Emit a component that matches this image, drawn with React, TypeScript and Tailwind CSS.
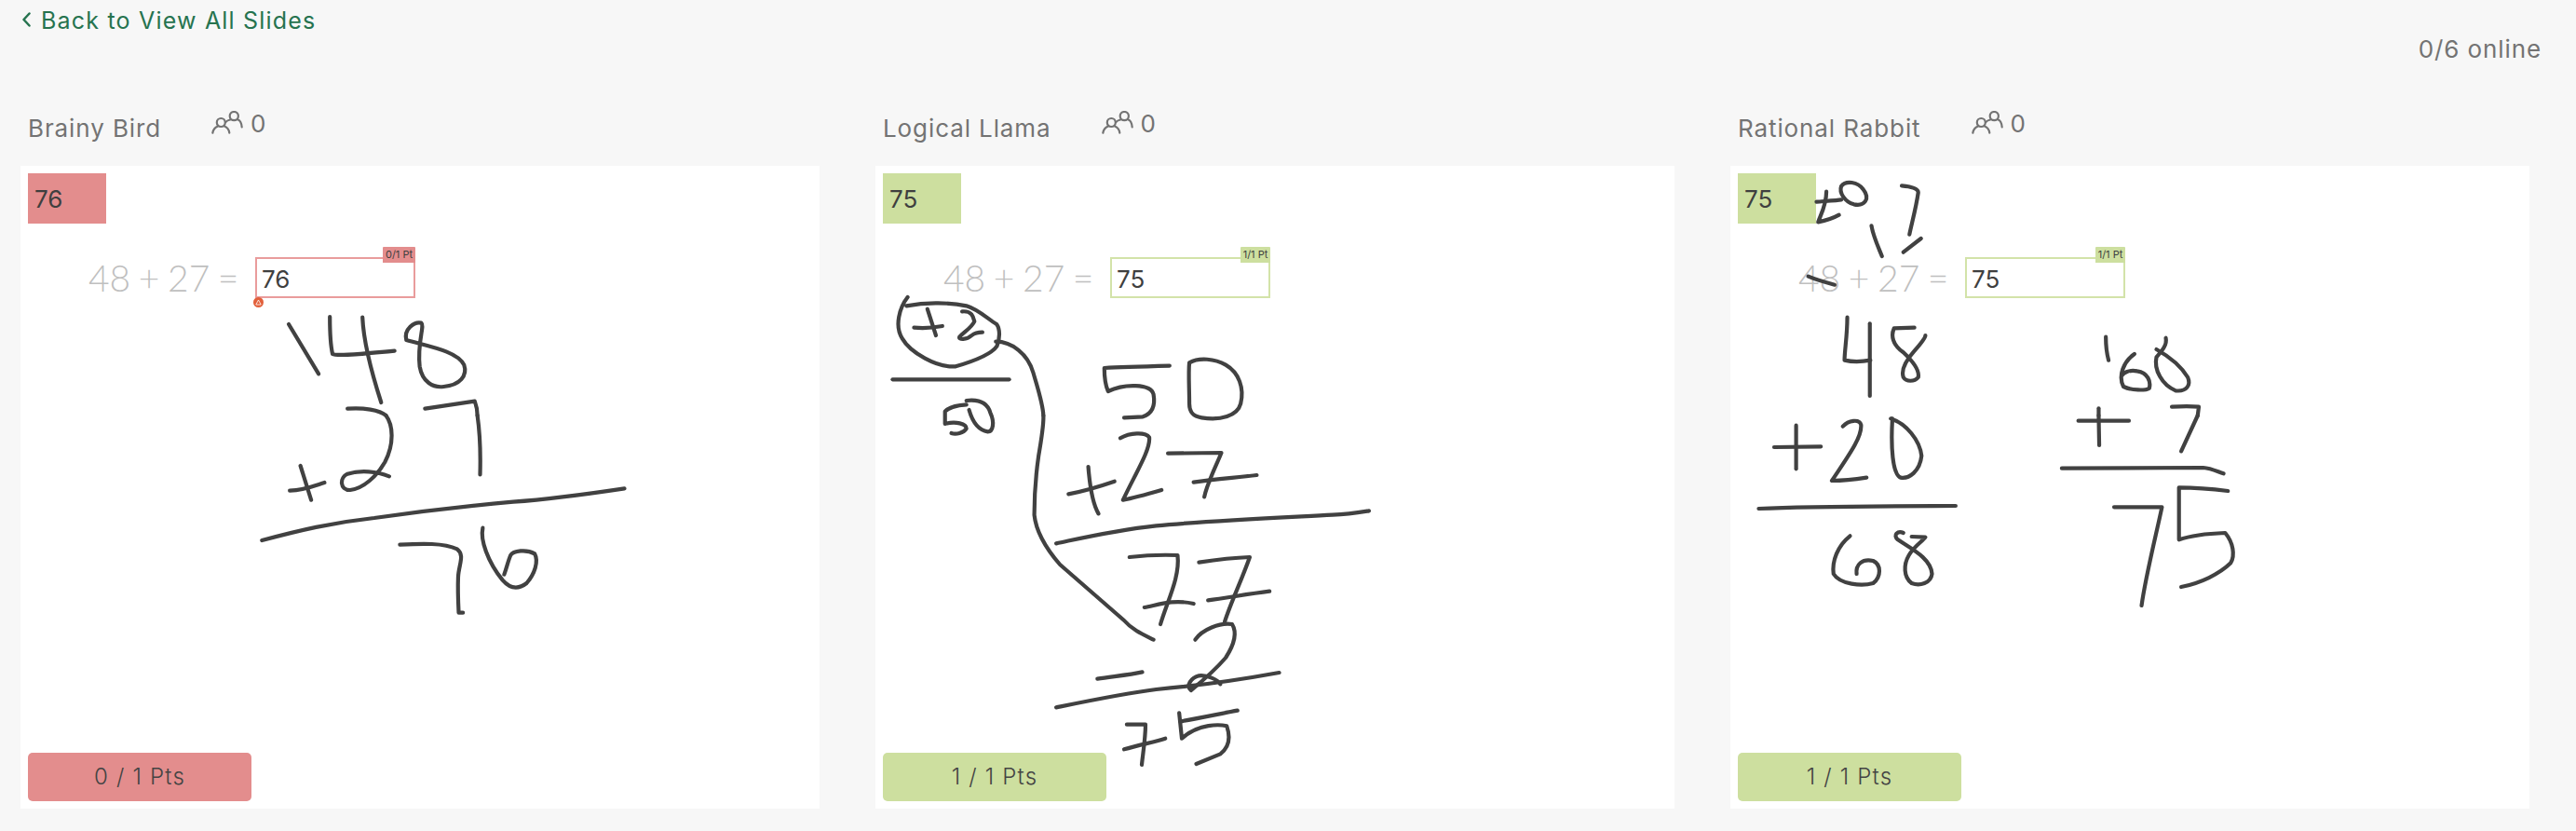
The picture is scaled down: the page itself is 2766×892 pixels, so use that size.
import React from 'react';

// Ink strokes were traced from crops, so each group has its own origin and scale.
type Stroke = { x: number; y: number; sx: number; d: string[] };

const panelOneInk: Stroke[] = [
  {
    x: -22, y: -178, sx: 1 / 1.742,
    d: [
      'M540 1044 L596 1204',
      'M617 1020 C617 1060 618 1110 622 1140 C630 1148 690 1138 738 1130',
      'M678 1022 C680 1100 695 1200 713 1296',
      'M760 1095 C755 1060 775 1035 788 1040 C795 1050 780 1100 785 1180 C790 1230 810 1250 830 1245 C860 1240 875 1210 868 1175 C855 1130 800 1115 760 1095 Z',
      'M650 1316 C680 1312 710 1320 722 1338',
      'M795 1316 L888 1292 C892 1310 893 1325 893 1338',
    ],
  },
  {
    x: -22, y: 268, sx: 1 / 1.742,
    d: [
      'M722 0 C735 30 738 90 720 150 C705 195 680 235 655 240 C635 240 635 200 650 188 C675 175 705 180 728 196',
      'M893 0 C898 60 899 130 898 190',
      'M562 162 L582 272',
      'M542 242 C570 240 590 225 607 216',
      'M490 402 C560 370 620 345 700 330 C800 305 880 290 960 278 C1040 268 1110 250 1168 235',
      'M748 416 C790 412 830 410 855 430 C870 450 858 480 857 520 C856 560 857 600 858 635 L866 635',
      'M903 362 C898 400 912 470 940 530 C955 560 970 560 985 540 C1000 510 1008 470 1000 445 C985 430 960 435 955 450 C950 470 948 490 943 512',
    ],
  },
];

const panelTwoInk: Stroke[] = [
  {
    x: -20, y: -78, sx: 1 / 1.742,
    d: [
      'M95 657 C80 690 70 750 85 790 C100 835 150 885 185 880 C215 865 250 845 262 815 C268 790 268 760 262 745 C240 720 225 695 205 685 C170 672 125 675 93 685',
      'M132 695 L148 780',
      'M107 755 C125 758 145 755 160 750',
      'M197 703 C215 700 218 720 220 735 C215 755 200 770 192 785 C190 795 205 795 215 780 C222 770 230 770 235 770',
      'M260 800 C290 800 320 840 330 900 C340 960 348 1000 349 1038',
      'M67 922 L285 922',
      'M205 1003 C185 1005 170 1015 165 1025 L165 1065 C185 1055 205 1065 205 1080 C200 1095 185 1100 177 1095',
      'M205 990 C230 985 245 1000 250 1030 C258 1060 255 1090 245 1090 C225 1085 215 1050 210 1020',
      'M585 878 C540 880 495 882 463 885 C463 910 465 940 470 960 C500 935 550 935 555 970 C558 1000 555 1030 535 1042 L500 1045',
      'M622 868 C640 850 670 855 690 875 C715 900 725 950 718 1000 C712 1040 680 1055 645 1045 C625 1040 622 1020 622 1000 C622 950 620 900 622 868 Z',
    ],
  },
  {
    x: -20, y: 268, sx: 1 / 1.742,
    d: [
      'M349 0 C350 30 345 80 340 130 C335 190 332 260 332 320 C335 370 350 420 380 480 C400 510 420 540 440 570 C460 600 480 630 500 660 C515 690 535 705 555 722',
      'M493 73 C510 55 540 52 547 70 C550 110 520 190 498 272 C520 265 550 250 570 240',
      'M582 122 L682 120 C670 170 655 220 650 262',
      'M630 215 C670 205 710 200 748 192',
      'M433 165 C435 210 440 280 452 316',
      'M396 253 C420 245 460 225 482 212',
      'M373 412 C420 395 480 370 560 355 C650 340 780 330 890 320 C920 318 940 312 958 307',
      'M510 456 C540 450 570 448 600 450 C605 520 580 600 568 672',
      'M538 618 C560 612 590 590 630 606',
      'M640 473 C670 465 700 458 735 456 C720 530 700 600 688 665',
      'M657 595 C690 588 730 575 772 566',
      'M633 722 C645 690 680 665 702 672 C712 700 705 740 690 780 C675 810 650 850 625 885 C615 870 625 845 640 838 C655 835 675 850 680 865',
      'M450 848 C480 840 510 835 534 826',
      'M373 940 C430 920 500 895 560 882 C640 870 720 850 790 828',
      'M505 995 L540 995 C540 1040 535 1090 533 1125',
      'M500 1075 C530 1060 560 1050 577 1040',
      'M712 950 C680 960 640 975 605 985',
      'M603 958 L608 1040 C640 990 680 995 692 1000 C700 1040 695 1070 680 1090 L635 1122',
    ],
  },
];

const panelThreeInk: Stroke[] = [
  {
    x: -18, y: -178, sx: 1 / 1.693,
    d: [
      'M205 617 C205 660 195 690 190 715 C205 710 220 700 228 692',
      'M187 650 C200 648 225 645 232 643',
      'M232 600 C240 580 262 585 272 610 C285 640 275 665 255 658 C238 650 228 620 232 600 Z',
      'M342 598 C355 600 372 605 372 620 C368 670 360 720 356 755',
      'M287 727 C290 760 298 790 306 825',
      'M377 768 L345 812',
      'M172 890 C185 900 205 910 220 917',
      'M243 1022 C243 1080 238 1130 238 1160 C250 1165 270 1165 285 1160',
      'M284 1042 L284 1275',
      'M365 1055 L328 1057 C322 1080 325 1110 345 1135 C360 1160 375 1190 372 1215 C365 1230 350 1230 345 1215 C340 1190 350 1160 365 1130 C375 1110 385 1090 385 1080',
      'M713 1085 C713 1110 715 1140 718 1160',
      'M765 1140 C745 1165 735 1210 745 1245 C760 1258 785 1258 792 1250 C795 1230 790 1200 770 1195 C755 1190 745 1200 742 1210',
      'M822 1088 C825 1110 815 1130 805 1150 C800 1190 815 1240 840 1258 C860 1262 868 1240 862 1215 C850 1180 830 1150 805 1125',
      'M700 1315 L700 1338',
      'M833 1310 C850 1308 870 1308 882 1310 L880 1338',
    ],
  },
  {
    x: -18, y: 268, sx: 1 / 1.693,
    d: [
      'M700 0 L701 96',
      'M663 17 L755 17',
      'M880 0 L850 115',
      'M633 170 L890 168 C905 170 915 180 927 187',
      'M728 295 L815 295 C805 380 785 520 778 612',
      'M935 243 C900 235 870 232 846 232 L846 400 C870 385 900 380 930 378 C945 410 948 450 940 475 C920 510 885 540 850 552',
      'M150 32 L150 172',
      'M110 102 L195 100',
      'M235 35 C245 15 265 10 268 30 C270 70 245 130 215 210 C235 210 260 205 278 200',
      'M322 10 C350 25 375 80 378 130 C375 180 355 205 340 200 C325 190 322 100 325 10',
      'M82 300 C180 292 300 292 440 291',
      'M248 388 C225 420 215 470 218 510 C230 545 270 550 290 540 C305 520 305 480 290 468 C270 460 258 480 260 510',
      'M345 378 C335 370 325 385 335 400 C360 430 395 460 397 510 C395 540 375 550 360 540 C345 520 345 480 355 450 C365 420 380 405 385 392 L360 390',
    ],
  },
];

function Ink({ strokes }: { strokes: Stroke[] }) {
  return (
    <svg className="absolute inset-0 w-full h-full pointer-events-none" viewBox="0 0 858 690" fill="none">
      {strokes.map((s, i) => (
        <g key={i} transform={`translate(${s.x} ${s.y}) scale(${s.sx} ${1 / 3})`}>
          {s.d.map((d, j) => (
            <path key={j} d={d} stroke="#414141" strokeWidth={4.2} strokeLinecap="round" strokeLinejoin="round" vectorEffect="non-scaling-stroke" />
          ))}
        </g>
      ))}
    </svg>
  );
}

function PeopleIcon() {
  return (
    <svg width="34" height="25" viewBox="0 0 34 25" fill="none" stroke="#737373" strokeWidth="2.2" strokeLinecap="round" className="mt-[3px] shrink-0">
      <circle cx="10.3" cy="12.5" r="4.5" />
      <circle cx="24.3" cy="5.6" r="4.6" />
      <path d="M1.3 23.7 C2 19.5 4.5 17.5 7 16.5 M14 16.5 C17 17.5 18.8 20 19.3 23.7" />
      <path d="M15.5 12 C16.5 10.5 18 10 20.2 9.5 M28.5 9.5 C31 10.3 32.3 13 32.7 17.5" />
    </svg>
  );
}

type PanelProps = {
  name: string;
  answer: string;
  score: string;
  badge: string;
  correct: boolean;
  ink: Stroke[];
};

function Panel({ name, answer, score, badge, correct, ink }: PanelProps) {
  const fill = correct ? 'bg-[#cddf9f]' : 'bg-[#e38d8d]';
  return (
    <div className="w-[858px]">
      <div className="h-[62px] flex items-start pl-[8px] text-[#737373]">
        <span className="mt-[7px] text-[26px] leading-[30px] tracking-[0.9px]">{name}</span>
        <span className="ml-[54px] flex items-start">
          <PeopleIcon />
          <span className="ml-[8px] mt-[5px] text-[26px] leading-[24px]">0</span>
        </span>
      </div>
      <div className="bg-white h-[690px] p-[8px] relative flex flex-col justify-between">
        <div>
          <div className={`w-[84px] h-[54px] flex items-center pl-[7px] text-[26px] text-[#3f3f3f] ${fill}`}>{answer}</div>
          <div className="flex items-center mt-[36px] ml-[65px]">
            <span className="w-[179px] font-['Lato',sans-serif] text-[39px] font-light text-[#bfbfbf] leading-none [word-spacing:-2px]">48 + 27 =</span>
            <div className={`relative w-[172px] h-[44px] border-2 bg-white flex items-center pl-[5px] pt-[3px] text-[26px] text-[#3f3f3f] ${correct ? 'border-[#d3e3a9]' : 'border-[#e99c9c]'}`}>
              {answer}
              <span className={`absolute right-[-2px] top-[-13px] h-[17px] flex items-center justify-center text-[11px] text-[#3f3f3f] rounded-t-[1px] ${correct ? 'w-[32px]' : 'w-[35px]'} ${fill}`}>{badge}</span>
              {!correct && (
                <span className="absolute left-[-4px] bottom-[-12px] w-[11px] h-[11px] rounded-full bg-[#e2603b] flex items-center justify-center">
                  <svg width="7" height="7" viewBox="0 0 7 7" fill="none" stroke="#ffffff" strokeWidth="0.8">
                    <path d="M3.5 1 L6.2 6 H0.8 Z" />
                  </svg>
                </span>
              )}
            </div>
          </div>
        </div>
        <div className={`w-[240px] h-[52px] rounded-[5px] flex items-center justify-center text-[24px] tracking-[1.2px] font-light text-[#444444] ${fill}`}>{score}</div>
        <Ink strokes={ink} />
      </div>
    </div>
  );
}

export default function App() {
  return (
    <div className="w-full h-[892px] bg-[#f7f7f7] overflow-hidden font-['Inter',sans-serif]">
      <div className="h-[116px] flex justify-between">
        <div className="flex items-start pl-[23px] pt-[8px] text-[25px] leading-[28px] tracking-[1.2px] text-[#26734f]">
          <svg width="11" height="16" viewBox="0 0 11 16" fill="none" stroke="#26734f" strokeWidth="2.5" strokeLinecap="round" strokeLinejoin="round" className="mt-[5px] mr-[10px]">
            <path d="M8.5 1.5 L2.5 8 L8.5 14.5" />
          </svg>
          <span>Back to View All Slides</span>
        </div>
        <div className="pr-[37px] pt-[38px] text-[26px] leading-[30px] tracking-[0.9px] text-[#737373]">0/6 online</div>
      </div>
      <div className="flex gap-[60px] pl-[22px]">
        <Panel name="Brainy Bird" answer="76" score="0 / 1 Pts" badge="0/1 Pt" correct={false} ink={panelOneInk} />
        <Panel name="Logical Llama" answer="75" score="1 / 1 Pts" badge="1/1 Pt" correct ink={panelTwoInk} />
        <Panel name="Rational Rabbit" answer="75" score="1 / 1 Pts" badge="1/1 Pt" correct ink={panelThreeInk} />
      </div>
    </div>
  );
}
